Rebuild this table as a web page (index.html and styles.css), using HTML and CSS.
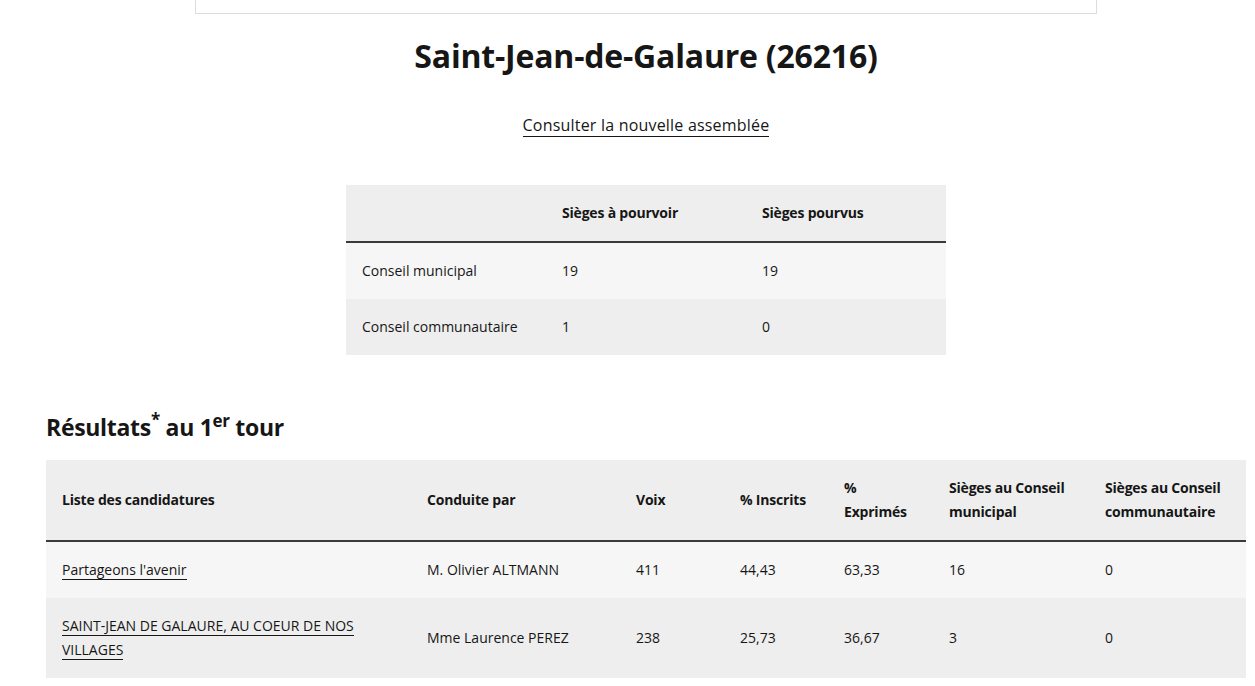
FILE: index.html
```html
<!DOCTYPE html>
<html lang="fr">
<head>
<meta charset="utf-8">
<title>Saint-Jean-de-Galaure (26216)</title>
<link rel="stylesheet" href="styles.css">
</head>
<body>
<main class="page">
  <div class="top-box"></div>
  <h1 class="title">Saint-Jean-de-Galaure (26216)</h1>
  <p class="assembly"><a href="#" class="link">Consulter la nouvelle assemblée</a></p>

  <table class="table seats">
    <thead>
      <tr><th></th><th>Sièges à pourvoir</th><th>Sièges pourvus</th></tr>
    </thead>
    <tbody>
      <tr><td>Conseil municipal</td><td>19</td><td>19</td></tr>
      <tr><td>Conseil communautaire</td><td>1</td><td>0</td></tr>
    </tbody>
  </table>

  <h2 class="results-title">Résultats<sup class="star">*</sup> au 1<sup class="er">er</sup> tour</h2>

  <table class="table results">
    <colgroup>
      <col class="c-list"><col class="c-lead"><col class="c-num"><col class="c-num"><col class="c-num2"><col class="c-seat"><col class="c-seat2">
    </colgroup>
    <thead>
      <tr>
        <th>Liste des candidatures</th>
        <th>Conduite par</th>
        <th>Voix</th>
        <th>% Inscrits</th>
        <th>% Exprimés</th>
        <th>Sièges au Conseil municipal</th>
        <th>Sièges au Conseil communautaire</th>
      </tr>
    </thead>
    <tbody>
      <tr>
        <td><a href="#" class="link">Partageons l'avenir</a></td>
        <td>M. Olivier ALTMANN</td>
        <td>411</td><td>44,43</td><td>63,33</td><td>16</td><td>0</td>
      </tr>
      <tr>
        <td><a href="#" class="link">SAINT-JEAN DE GALAURE, AU COEUR DE NOS VILLAGES</a></td>
        <td>Mme Laurence PEREZ</td>
        <td>238</td><td>25,73</td><td>36,67</td><td>3</td><td>0</td>
      </tr>
    </tbody>
  </table>
</main>
</body>
</html>
```
FILE: styles.css
```css
* { box-sizing: border-box; }
html, body { margin: 0; padding: 0; background: #fff; }
body {
  font-family: "Open Sans", "Liberation Sans", sans-serif;
  color: #161616;
}
.page {
  width: 1200px;
  margin-left: 46px;
  display: flex;
  flex-direction: column;
  align-items: center;
}
.top-box {
  width: 902px;
  height: 14px;
  border: 1px solid #dddddd;
  border-top: none;
}
.title {
  margin: 22px 0 0;
  font-size: 32px;
  line-height: 40px;
  font-weight: 700;
  letter-spacing: -0.2px;
}
.assembly {
  margin: 37px 0 0;
  font-size: 16px;
  line-height: 24px;
  letter-spacing: 0.2px;
}
.link {
  color: #161616;
  text-decoration: none;
  background-image: linear-gradient(#161616, #161616);
  background-size: 100% 1px;
  background-position: 0 100%;
  background-repeat: no-repeat;
  padding-bottom: 1px;
}
.table {
  border-collapse: collapse;
  font-size: 14px;
  line-height: 24px;
  text-align: left;
}
.table th, .table td {
  padding: 16px;
  vertical-align: middle;
}
.table th { font-weight: 700; letter-spacing: -0.2px; }
.table thead tr { background: #eeeeee; border-bottom: 2px solid #3a3a3a; }
.table tbody tr:nth-child(odd) { background: #f6f6f6; }
.table tbody tr:nth-child(even) { background: #eeeeee; }
.seats {
  margin-top: 48px;
  width: 600px;
  table-layout: fixed;
}
.seats td, .seats th { width: 200px; }
.results-title {
  align-self: flex-start;
  margin: 56px 0 0;
  font-size: 23px;
  line-height: 32px;
  font-weight: 700;
  letter-spacing: -0.3px;
}
.results-title sup { line-height: 0; }
.star { font-size: 17px; position: relative; top: -1px; }
.er { font-size: 17px; }
.results {
  margin-top: 17px;
  width: 1200px;
  table-layout: fixed;
}
.c-list { width: 365px; }
.c-lead { width: 209px; }
.c-num { width: 104px; }
.c-num2 { width: 105px; }
.c-seat { width: 156px; }
.c-seat2 { width: 157px; }
```
